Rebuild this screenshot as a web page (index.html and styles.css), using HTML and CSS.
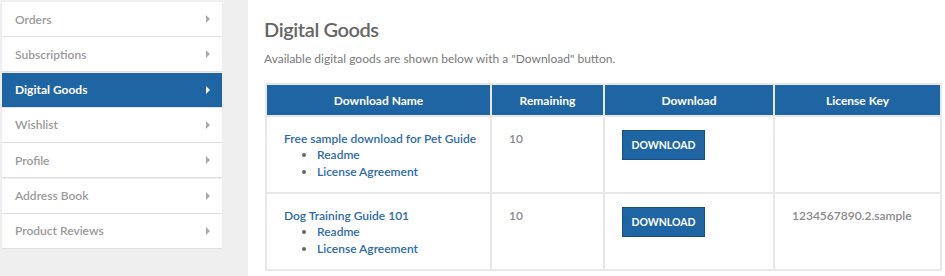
FILE: index.html
```html
<!DOCTYPE html>
<html lang="en">
<head>
  <meta charset="UTF-8">
  <meta name="viewport" content="width=device-width, initial-scale=1.0">
  <title>Digital Goods</title>
  <link rel="stylesheet" href="styles.css">
</head>
<body>
  <div class="page">
    <div class="side">
      <a class="item" href="#">Orders <span class="arr"></span></a>
      <a class="item" href="#">Subscriptions <span class="arr"></span></a>
      <a class="item active" href="#">Digital Goods <span class="arr"></span></a>
      <a class="item" href="#">Wishlist <span class="arr"></span></a>
      <a class="item" href="#">Profile <span class="arr"></span></a>
      <a class="item" href="#">Address Book <span class="arr"></span></a>
      <a class="item" href="#">Product Reviews <span class="arr"></span></a>
    </div>

    <div class="main">
      <h1>Digital Goods</h1>
      <p class="sub">Available digital goods are shown below with a "Download" button.</p>

      <table class="goods">
        <tr>
          <th class="c1">Download Name</th>
          <th class="c2">Remaining</th>
          <th class="c3">Download</th>
          <th class="c4">License Key</th>
        </tr>
        <tr>
          <td>
            <a href="#">Free sample download for Pet Guide</a>
            <ul>
              <li><a href="#">Readme</a></li>
              <li><a href="#">License Agreement</a></li>
            </ul>
          </td>
          <td>10</td>
          <td><button class="dl">DOWNLOAD</button></td>
          <td></td>
        </tr>
        <tr>
          <td>
            <a href="#">Dog Training Guide 101</a>
            <ul>
              <li><a href="#">Readme</a></li>
              <li><a href="#">License Agreement</a></li>
            </ul>
          </td>
          <td>10</td>
          <td><button class="dl">DOWNLOAD</button></td>
          <td>1234567890.2.sample</td>
        </tr>
      </table>
    </div>
  </div>
</body>
</html>
```

FILE: styles.css
```css
* {
  padding: 0;
  margin: 0;
  box-sizing: border-box;
}

body {
  background: #efefef;
  font-family: Lato, "Liberation Sans", sans-serif;
  width: 945px;
  height: 276px;
  overflow: hidden;
}

.page {
  display: flex;
  height: 276px;
}

.side {
  width: 220px;
  margin: 2px 26px 0 2px;
  display: flex;
  flex-direction: column;
  gap: 1.33px;
}

.item {
  height: 34px;
  background: white;
  display: flex;
  align-items: center;
  justify-content: space-between;
  padding: 0 12px 0 13px;
  color: #9a9a9a;
  font-size: 12px;
  font-weight: 600;
  text-decoration: none;
  box-shadow: 0 1px 1px rgba(0, 0, 0, 0.06);
}

.item.active {
  background: #1f65a3;
  color: white;
  font-weight: bold;
}

.arr {
  width: 0;
  height: 0;
  border-left: 4px solid #aaaaaa;
  border-top: 4px solid transparent;
  border-bottom: 4px solid transparent;
}

.item.active .arr {
  border-left-color: white;
}

.main {
  flex: 1;
  background: white;
  padding: 17px 3px 0 16px;
}

h1 {
  font-size: 20px;
  font-weight: 600;
  color: #666666;
  line-height: 24px;
  letter-spacing: -0.4px;
}

.sub {
  font-size: 12px;
  color: #7a7a7a;
  margin-top: 10px;
  line-height: 16px;
}

.goods {
  margin-top: 16px;
  margin-left: 1px;
  width: 677px;
  table-layout: fixed;
  border-collapse: collapse;
  border: 2px solid #e8e8e8;
  font-size: 12px;
}

.goods th {
  background: #1f65a3;
  color: white;
  font-weight: bold;
  height: 32px;
  border: 2px solid #e8e8e8;
  border-top: 0;
}

.c1 { width: 225px; }
.c2 { width: 113px; }
.c3 { width: 170px; }

.goods td {
  border: 2px solid #e8e8e8;
  vertical-align: top;
  padding: 14px 16px 0 17px;
  height: 77px;
  color: #8a8a8a;
  font-weight: 600;
}

.goods a {
  color: #2c6aa8;
  text-decoration: none;
  font-weight: 600;
  white-space: nowrap;
}

.goods ul {
  padding-left: 33px;
  line-height: 17px;
  color: #666666;
}

.goods td > a {
  line-height: 15px;
}

.dl {
  background: #1f65a3;
  color: white;
  border: 1px solid #174f82;
  width: 83px;
  height: 30px;
  font-size: 10.5px;
  font-weight: bold;
  font-family: Lato, "Liberation Sans", sans-serif;
  margin-top: -1px;
}
```
